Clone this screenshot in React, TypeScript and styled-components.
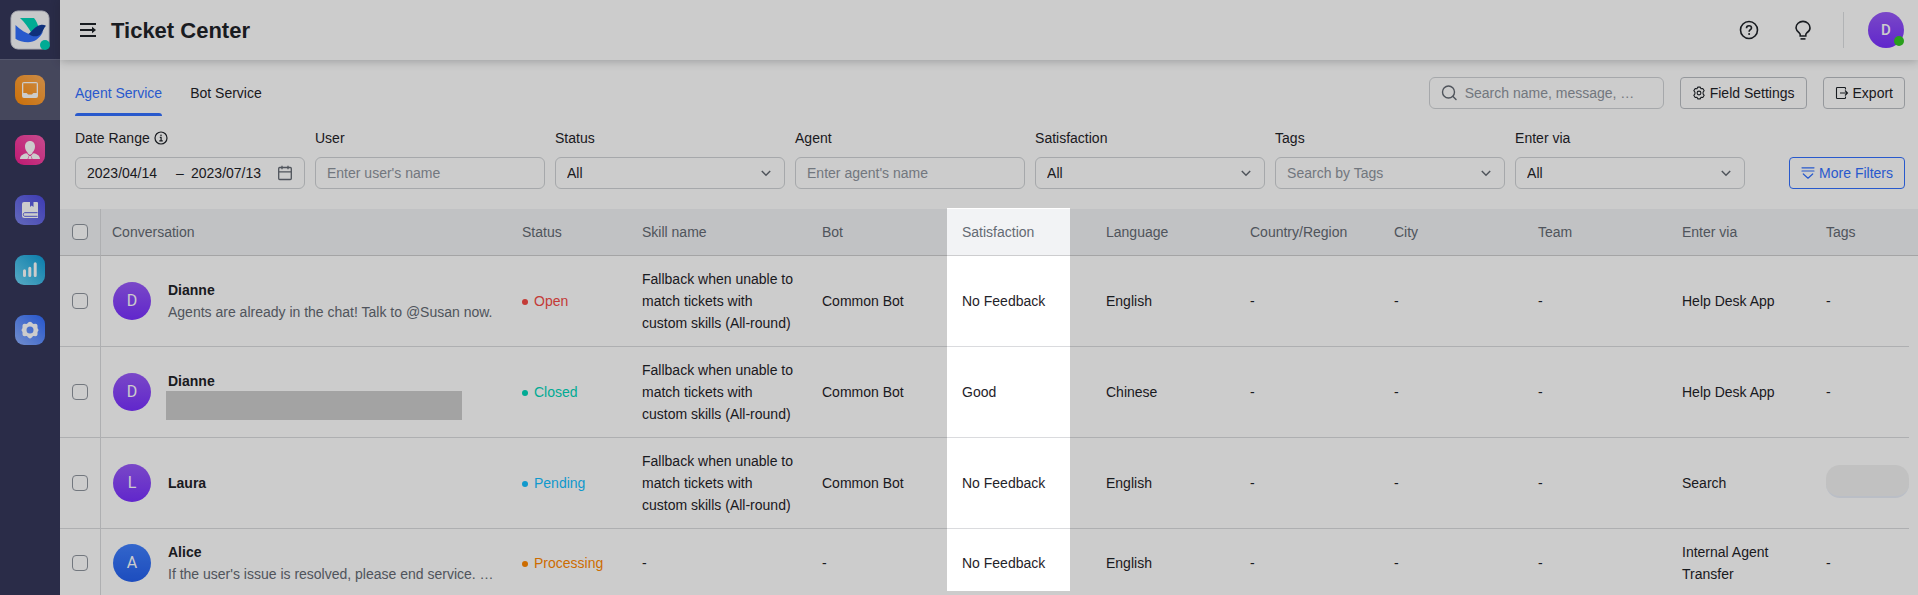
import React from "react";
import styled, { createGlobalStyle, css } from "styled-components";

const GlobalStyle = createGlobalStyle`
  *, *::before, *::after { box-sizing: border-box; }
  body {
    margin: 0;
    background: #fff;
    color: #1f2329;
    font-family: "Liberation Sans", Arial, sans-serif;
    font-size: 14px;
    line-height: 22px;
  }
  button, input, select { font: inherit; color: inherit; }
`;

/* ---------- shell ---------- */

const Shell = styled.div`
  display: flex;
  height: 100vh;
  min-width: 1500px;
  overflow: hidden;
`;

const Sidebar = styled.nav`
  flex: 0 0 60px;
  background: #35375a;
`;

const LogoArea = styled.div`
  display: flex;
  align-items: center;
  justify-content: center;
  height: 60px;
  border-bottom: 1px solid #6a6c88;
`;

const NavItem = styled.a<{ $active?: boolean }>`
  display: flex;
  align-items: center;
  justify-content: center;
  height: 60px;
  background: ${(p) => (p.$active ? "#575974" : "transparent")};
`;

const NavTile = styled.span<{ $from: string; $to: string }>`
  display: block;
  width: 30px;
  height: 30px;
  border-radius: 9px;
  background: linear-gradient(45deg, ${(p) => p.$from}, ${(p) => p.$to});
  svg { display: block; }
`;

const Main = styled.main`
  flex: 1;
  min-width: 0;
  display: flex;
  flex-direction: column;
`;

/* ---------- header ---------- */

const Header = styled.header`
  flex: none;
  display: flex;
  align-items: center;
  height: 60px;
  padding: 0 14px 0 20px;
  box-shadow: 0 1px 9px rgba(31, 35, 41, 0.28);
`;

const IconButton = styled.button`
  display: flex;
  padding: 0;
  border: 0;
  background: none;
`;

const Title = styled.h1`
  flex: 1;
  margin: 0 0 0 15px;
  padding-top: 2px;
  font-size: 22px;
  line-height: 32px;
`;

const HeaderTools = styled.div`
  display: flex;
  align-items: center;
  gap: 34px;
`;

const Divider = styled.span`
  width: 1px;
  height: 36px;
  margin: 0 24px 0 30px;
  background: #dee0e3;
`;

const Avatar = styled.span<{ $tone?: "purple" | "blue" }>`
  position: relative;
  flex: none;
  display: flex;
  align-items: center;
  justify-content: center;
  width: 38px;
  height: 38px;
  border-radius: 50%;
  background: ${(p) =>
    p.$tone === "blue"
      ? "linear-gradient(#4080ff, #2460ee)"
      : "linear-gradient(#985afa, #7930ff)"};
  color: #fff;
  font-family: Roboto, sans-serif;
  font-size: 16px;
`;

const AccountAvatar = styled(Avatar)`
  width: 36px;
  height: 36px;
  font-size: 15px;
  font-weight: 500;
`;

const Presence = styled.i`
  position: absolute;
  right: 0;
  bottom: 2px;
  width: 10px;
  height: 10px;
  border-radius: 50%;
  background: #34c724;
`;

/* ---------- toolbar ---------- */

const Toolbar = styled.div`
  flex: none;
  display: flex;
  align-items: flex-start;
  gap: 16px;
  padding: 17px 13px 0 15px;
`;

const Tabs = styled.div`
  flex: 1;
  display: flex;
  gap: 28px;
`;

const Tab = styled.button<{ $active?: boolean }>`
  position: relative;
  padding: 5px 0 12px;
  border: 0;
  background: none;
  color: ${(p) => (p.$active ? "#3370ff" : "#1f2329")};
  ${(p) =>
    p.$active &&
    css`
      &::after {
        content: "";
        position: absolute;
        left: 0;
        right: 0;
        bottom: 0;
        height: 3px;
        border-radius: 3px 3px 0 0;
        background: #3370ff;
      }
    `}
`;

const Button = styled.button<{ $primary?: boolean }>`
  flex: none;
  display: flex;
  align-items: center;
  gap: 4px;
  height: 32px;
  padding: 0 11px;
  border: 1px solid ${(p) => (p.$primary ? "#3370ff" : "#bbbfc4")};
  border-radius: 4px;
  background: #fff;
  color: ${(p) => (p.$primary ? "#3370ff" : "#1f2329")};
  white-space: nowrap;
`;

const Field = styled.div`
  position: relative;
  display: flex;
  align-items: center;
  width: 100%;
  height: 32px;
  padding: 0 11px;
  border: 1px solid #d0d3d6;
  border-radius: 6px;
  color: #646a73;
`;

const SearchField = styled(Field)`
  gap: 8px;
  width: 235px;
`;

const TextInput = styled.input`
  flex: 1;
  min-width: 0;
  padding: 0;
  border: 0;
  outline: 0;
  background: none;
  color: #1f2329;
  &::placeholder { color: #8f959e; opacity: 1; }
`;

const StartDateInput = styled(TextInput)`
  flex: 0 0 80px;
`;

const Dash = styled.span`
  width: 24px;
  padding-left: 9px;
  color: #1f2329;
`;

/* ---------- filters ---------- */

const Filters = styled.div`
  flex: none;
  display: flex;
  align-items: flex-end;
  gap: 44px;
  padding: 11px 13px 20px 15px;
`;

const FilterGrid = styled.div`
  flex: 1;
  display: grid;
  grid-template-columns: repeat(7, minmax(0, 1fr));
  gap: 10px;
`;

const FilterCell = styled.div`
  display: flex;
  flex-direction: column;
  gap: 8px;
`;

const FilterLabel = styled.label`
  display: flex;
  align-items: center;
  gap: 4px;
`;

const Select = styled.select<{ $muted?: boolean }>`
  flex: 1;
  min-width: 0;
  padding: 0;
  border: 0;
  outline: 0;
  appearance: none;
  background: none;
  color: ${(p) => (p.$muted ? "#8f959e" : "#1f2329")};
`;

/* ---------- table ---------- */

const TableArea = styled.section`
  position: relative;
  flex: 1;
  min-height: 0;
`;

const Table = styled.table`
  width: 100%;
  table-layout: fixed;
  border-collapse: separate;
  border-spacing: 0;
`;

const Th = styled.th`
  height: 47px;
  padding: 0 12px;
  border-bottom: 1px solid #cdcdcf;
  background: #f2f3f5;
  color: #646a73;
  font-weight: 400;
  text-align: left;
  white-space: nowrap;
`;

const Td = styled.td`
  padding: 12px;
  border-bottom: 1px solid #dadbde;
`;

const GutterTh = styled(Th)`
  padding: 0;
`;

const divided = css`
  padding-left: 11px;
  border-left: 1px solid #dadbde;
`;

const ConversationTh = styled(Th)`${divided}`;
const ConversationTd = styled(Td)`${divided}`;

const TagTd = styled(Td)`
  padding-right: 0;
`;

const Checkbox = styled.input.attrs({ type: "checkbox" })`
  display: block;
  width: 16px;
  height: 16px;
  margin: 0;
  appearance: none;
  border: 1px solid #8f959e;
  border-radius: 4px;
  background: #fff;
`;

const Conversation = styled.div`
  display: flex;
  align-items: center;
  gap: 17px;
  padding-left: 1px;
`;

const Person = styled.div`
  position: relative;
  min-width: 0;
`;

const Name = styled.div`
  font-weight: 700;
`;

const Message = styled.div`
  height: 22px;
  color: #646a73;
  white-space: nowrap;
`;

const Redaction = styled.span`
  position: absolute;
  left: -2px;
  top: 21px;
  width: 296px;
  height: 29px;
  background: #ccc;
`;

const Status = styled.span<{ $color: string }>`
  display: flex;
  align-items: center;
  gap: 6px;
  color: ${(p) => p.$color};
  &::before {
    content: "";
    width: 6px;
    height: 6px;
    margin-top: 2px;
    border-radius: 50%;
    background: currentColor;
  }
`;

const TagPill = styled.span`
  display: block;
  height: 33px;
  margin-bottom: 4px;
  border-bottom: 2px solid #e9eef8;
  border-radius: 14px;
  background: #f2f2f2;
`;

const Spotlight = styled.div`
  position: absolute;
  z-index: 10;
  top: -1px;
  right: 848px;
  bottom: 4px;
  width: 123px;
  box-shadow: 0 0 0 4000px rgba(0, 0, 0, 0.2);
  pointer-events: none;
`;

/* ---------- icons ---------- */

const Logo = () => (
  <svg width="40" height="40" viewBox="0 0 40 40" role="img" aria-label="Help desk">
    <rect x="1" y="1" width="38" height="38" rx="7" fill="#fbfbfd" stroke="#d5d6e0" />
    <path d="M10 8h14c2.400 2.800 4 6.500 4.500 9.500-2.500 1.500-5 4-7 5.500C18.500 17.500 14.500 12 10 8Z" fill="#00d6b9" />
    <path d="M5.500 15c4.500 4.500 10.500 8.500 17 10.200 4.500 1.200 8-.7 10.800-4.200-3.300 7.500-9 11.200-15.300 11.200-5 0-9.500-1.400-12.500-3.500Z" fill="#3370ff" />
    <path d="M18.500 24c4-3 6.500-8 12-9 2-.4 4 0 5.500.7-2.300 2-2.700 5.500-5 8-3.300 3.700-8.500 3.300-12.500.3Z" fill="#133c9a" />
    <circle cx="35" cy="35" r="5" fill="#00d6b9" />
  </svg>
);

const InboxGlyph = () => (
  <svg width="30" height="30" viewBox="0 0 30 30" fill="#fff">
    <path fillRule="evenodd" d="M9 7h12a2 2 0 0 1 2 2v12a2 2 0 0 1-2 2H9a2 2 0 0 1-2-2V9a2 2 0 0 1 2-2Zm-.700 1.300v9.700h3c.6 0 .9.300 1.100.8.200.5.500.8 1 .8h3.200c.5 0 .8-.3 1-.8.200-.5.500-.8 1.100-.8h3V8.300Z" />
  </svg>
);

const UserGlyph = () => (
  <svg width="30" height="30" viewBox="0 0 30 30" fill="#fff">
    <path d="M15 6c3 0 5 2.200 5 5.500 0 2.300-1 4.500-2.500 5.700v1L15 20l-2.500-1.800v-1C11 16 10 13.800 10 11.500 10 8.200 12 6 15 6Z" />
    <path d="M11.500 18.200 14 20.500 12.500 24H5c0-3 2.500-5 6.500-5.800ZM18.500 18.200 16 20.500l1.500 3.500H25c0-3-2.500-5-6.500-5.800ZM14.200 21h1.600l1 3h-3.600Z" />
  </svg>
);

const BookGlyph = () => (
  <svg width="30" height="30" viewBox="0 0 30 30">
    <path d="M9 7h6v5l1.700-1.500 1.800 1.500V7H22a1 1 0 0 1 1 1v15H9.500A2.500 2.500 0 0 1 7 20.500V9a2 2 0 0 1 2-2Z" fill="#fff" />
    <path d="M22.500 17.700H9.800c-2 0-2 3.600 0 3.600h12.700" fill="none" stroke="#5a5fe0" strokeWidth="1" />
  </svg>
);

const ChartGlyph = () => (
  <svg width="30" height="30" viewBox="0 0 30 30" stroke="#fff" strokeWidth="3" strokeLinecap="round">
    <path d="M9.500 15.800v4.700M14.800 13.300v7.200M20.200 8.700v11.800" />
  </svg>
);

const GearGlyph = () => (
  <svg width="30" height="30" viewBox="0 0 30 30">
    <path
      fill="#fff"
      fillRule="evenodd"
      d="M13.500 7.300c.8-.9 2.200-.9 3 0l1.200 1.300c.3.300.7.500 1.100.4l1.500-.2c1.200-.1 2.200.8 2.200 2v1.800c0 .4.100.8.300 1.100l.4.500c.4.500.4 1.200 0 1.700l-.4.500c-.2.300-.3.700-.3 1.100v1.800c0 1.200-1 2.100-2.200 2l-1.500-.2c-.4-.1-.8.100-1.100.4l-1.200 1.300c-.8.900-2.200.9-3 0l-1.200-1.300c-.3-.3-.7-.5-1.100-.4l-1.500.2c-1.200.1-2.200-.8-2.200-2v-1.800c0-.4-.1-.8-.3-1.100l-.4-.5c-.4-.5-.4-1.200 0-1.700l.4-.5c.2-.3.300-.7.300-1.100v-1.800c0-1.200 1-2.100 2.200-2l1.500.2c.4.100.8-.1 1.100-.4ZM15 11.600a3.500 3.500 0 1 0 0 7 3.500 3.500 0 0 0 0-7Z"
    />
  </svg>
);

const MenuIcon = () => (
  <svg width="16" height="16" viewBox="0 0 16 16">
    <path d="M0 2h16M0 8h13M0 14h16" stroke="#1f2329" strokeWidth="1.800" />
    <path d="M12 4.800 16 8l-4 3.200Z" fill="#1f2329" />
  </svg>
);

const HelpIcon = () => (
  <svg width="20" height="20" viewBox="0 0 20 20" fill="none" stroke="#1f2329" strokeWidth="1.600">
    <circle cx="10" cy="10" r="8.500" />
    <path d="M7.500 8.200c0-1.500 1.100-2.400 2.500-2.400s2.500.9 2.500 2.200c0 1.700-2.400 1.800-2.400 3.700" />
    <circle cx="10.100" cy="14" r="1" fill="#1f2329" stroke="none" />
  </svg>
);

const BulbIcon = () => (
  <svg width="20" height="20" viewBox="0 0 20 20" fill="none" stroke="#1f2329" strokeWidth="1.600">
    <path d="M7.200 16v-1.200c0-.8-.4-1.400-1.100-2.100A6.500 6.500 0 0 1 3 8c0-3.800 3.200-6.600 7-6.600S17 4.200 17 8c0 2-1.200 3.500-3.100 4.700-.7.700-1.100 1.300-1.100 2.100V16Z" />
    <path d="M7.500 18.900h5" />
  </svg>
);

const SearchIcon = () => (
  <svg width="16" height="16" viewBox="0 0 16 16" fill="none" stroke="currentColor" strokeWidth="1.400">
    <circle cx="7.500" cy="7" r="6" />
    <path d="m12 11.500 3 3" strokeLinecap="round" />
  </svg>
);

const SettingsIcon = () => (
  <svg width="14" height="14" viewBox="0 0 14 14" fill="none" stroke="#1f2329" strokeWidth="1.100" strokeLinejoin="round">
    <path d="M5.700 1.100h2.600l.7 1.700 1.800-.3 1.400 2.200L11.100 6v2l1.100 1.300-1.400 2.200-1.800-.3-.7 1.700H5.700L5 11.200l-1.800.3-1.400-2.200L2.900 8V6L1.800 4.700l1.400-2.200 1.800.3Z" />
    <circle cx="7" cy="7" r="1.900" />
  </svg>
);

const ExportIcon = () => (
  <svg width="14" height="14" viewBox="0 0 14 14" fill="none" stroke="#1f2329" strokeWidth="1.100">
    <path d="M10.500 3.500V2.300a.8.800 0 0 0-.8-.8H2.300a.8.800 0 0 0-.8.800v9.400c0 .4.300.8.800.8h7.400c.4 0 .8-.4.800-.8v-1.200M5 7h7.500M10 4.500 12.500 7 10 9.500" />
  </svg>
);

const FilterIcon = () => (
  <svg width="14" height="14" viewBox="0 0 14 14" fill="none" stroke="currentColor" strokeWidth="1.200">
    <path d="M1 1.800h12M1 5h12M2.300 8 7 12.200 11.700 8" strokeLinecap="round" strokeLinejoin="round" />
  </svg>
);

const InfoIcon = () => (
  <svg width="14" height="14" viewBox="0 0 14 14" fill="none" stroke="#1f2329" strokeWidth="1.200">
    <circle cx="7" cy="7" r="6" />
    <path d="M5.800 6.300h1.300v3.400M5.300 9.900h3.500" />
    <circle cx="7" cy="4.200" r=".8" fill="#1f2329" stroke="none" />
  </svg>
);

const CalendarIcon = () => (
  <svg width="16" height="16" viewBox="0 0 16 16" fill="none" stroke="currentColor" strokeWidth="1.300">
    <rect x="1.700" y="2.500" width="12.600" height="12" rx="1" />
    <path d="M1.700 6.800h12.600M5 .8v3.400M11 .8v3.400" />
  </svg>
);

const ChevronIcon = () => (
  <svg width="14" height="14" viewBox="0 0 14 14" fill="none" stroke="currentColor" strokeWidth="1.500" aria-hidden="true">
    <path d="m2.800 5 4.200 4.200L11.200 5" />
  </svg>
);

/* ---------- data ---------- */

const NAV = [
  { label: "Tickets", from: "#ff8c0a", to: "#ffb05a", glyph: <InboxGlyph /> },
  { label: "Users", from: "#f0208f", to: "#f95fb2", glyph: <UserGlyph /> },
  { label: "Knowledge base", from: "#7c84ea", to: "#4d4ae0", glyph: <BookGlyph /> },
  { label: "Reports", from: "#6fd6f5", to: "#0c9bd6", glyph: <ChartGlyph /> },
  { label: "Settings", from: "#8fb2ff", to: "#2f6bff", glyph: <GearGlyph /> },
];

const COLUMNS = [
  { title: "Status", width: 120 },
  { title: "Skill name", width: 180 },
  { title: "Bot", width: 140 },
  { title: "Satisfaction", width: 144 },
  { title: "Language", width: 144 },
  { title: "Country/Region", width: 144 },
  { title: "City", width: 144 },
  { title: "Team", width: 144 },
  { title: "Enter via", width: 144 },
  { title: "Tags", width: 95 },
];

const SKILL = "Fallback when unable to match tickets with custom skills (All-round)";

interface Ticket {
  name: string;
  message?: string;
  redacted?: boolean;
  tone?: "purple" | "blue";
  status: string;
  color: string;
  skill: string;
  bot: string;
  satisfaction: string;
  language: string;
  via: string;
  tagged?: boolean;
}

const TICKETS: Ticket[] = [
  { name: "Dianne", message: "Agents are already in the chat! Talk to @Susan now.", status: "Open", color: "#f54a45", skill: SKILL, bot: "Common Bot", satisfaction: "No Feedback", language: "English", via: "Help Desk App" },
  { name: "Dianne", redacted: true, status: "Closed", color: "#00d6b9", skill: SKILL, bot: "Common Bot", satisfaction: "Good", language: "Chinese", via: "Help Desk App" },
  { name: "Laura", status: "Pending", color: "#14c0ff", skill: SKILL, bot: "Common Bot", satisfaction: "No Feedback", language: "English", via: "Search", tagged: true },
  { name: "Alice", message: "If the user's issue is resolved, please end service. …", tone: "blue", status: "Processing", color: "#ff8800", skill: "-", bot: "-", satisfaction: "No Feedback", language: "English", via: "Internal Agent Transfer" },
];

/* ---------- composed parts ---------- */

const TextFilter = ({ id, label, placeholder }: { id: string; label: string; placeholder: string }) => (
  <FilterCell>
    <FilterLabel htmlFor={id}>{label}</FilterLabel>
    <Field>
      <TextInput id={id} placeholder={placeholder} />
    </Field>
  </FilterCell>
);

const SelectFilter = ({ id, label, value, muted }: { id: string; label: string; value: string; muted?: boolean }) => (
  <FilterCell>
    <FilterLabel htmlFor={id}>{label}</FilterLabel>
    <Field>
      <Select id={id} $muted={muted}>
        <option>{value}</option>
      </Select>
      <ChevronIcon />
    </Field>
  </FilterCell>
);

const TicketRow = ({ ticket: t }: { ticket: Ticket }) => (
  <tr>
    <Td>
      <Checkbox aria-label={`Select ${t.name}`} />
    </Td>
    <ConversationTd>
      <Conversation>
        <Avatar $tone={t.tone}>{t.name[0]}</Avatar>
        <Person>
          <Name>{t.name}</Name>
          {t.message && <Message>{t.message}</Message>}
          {t.redacted && (
            <>
              <Message />
              <Redaction />
            </>
          )}
        </Person>
      </Conversation>
    </ConversationTd>
    <Td>
      <Status $color={t.color}>{t.status}</Status>
    </Td>
    <Td>{t.skill}</Td>
    <Td>{t.bot}</Td>
    <Td>{t.satisfaction}</Td>
    <Td>{t.language}</Td>
    <Td>-</Td>
    <Td>-</Td>
    <Td>-</Td>
    <Td>{t.via}</Td>
    <TagTd>{t.tagged ? <TagPill /> : "-"}</TagTd>
  </tr>
);

export default function App() {
  return (
    <Shell>
      <GlobalStyle />
      <Sidebar aria-label="Main">
        <LogoArea>
          <Logo />
        </LogoArea>
        {NAV.map((n, i) => (
          <NavItem key={n.label} href="#" aria-label={n.label} $active={i === 0}>
            <NavTile $from={n.from} $to={n.to}>{n.glyph}</NavTile>
          </NavItem>
        ))}
      </Sidebar>

      <Main>
        <Header>
          <IconButton aria-label="Expand menu"><MenuIcon /></IconButton>
          <Title>Ticket Center</Title>
          <HeaderTools>
            <IconButton aria-label="Help"><HelpIcon /></IconButton>
            <IconButton aria-label="Tips"><BulbIcon /></IconButton>
          </HeaderTools>
          <Divider />
          <AccountAvatar>D<Presence /></AccountAvatar>
        </Header>

        <Toolbar>
          <Tabs role="tablist">
            <Tab role="tab" aria-selected="true" $active>Agent Service</Tab>
            <Tab role="tab" aria-selected="false">Bot Service</Tab>
          </Tabs>
          <SearchField>
            <SearchIcon />
            <TextInput aria-label="Search" placeholder="Search name, message, …" />
          </SearchField>
          <Button><SettingsIcon />Field Settings</Button>
          <Button><ExportIcon />Export</Button>
        </Toolbar>

        <Filters>
          <FilterGrid>
            <FilterCell>
              <FilterLabel htmlFor="date-from">Date Range <InfoIcon /></FilterLabel>
              <Field>
                <StartDateInput id="date-from" defaultValue="2023/04/14" />
                <Dash>–</Dash>
                <TextInput aria-label="Date range end" defaultValue="2023/07/13" />
                <CalendarIcon />
              </Field>
            </FilterCell>
            <TextFilter id="user" label="User" placeholder="Enter user's name" />
            <SelectFilter id="status" label="Status" value="All" />
            <TextFilter id="agent" label="Agent" placeholder="Enter agent's name" />
            <SelectFilter id="satisfaction" label="Satisfaction" value="All" />
            <SelectFilter id="tags" label="Tags" value="Search by Tags" muted />
            <SelectFilter id="via" label="Enter via" value="All" />
          </FilterGrid>
          <Button $primary><FilterIcon />More Filters</Button>
        </Filters>

        <TableArea>
          <Table>
            <colgroup>
              <col width={40} />
              <col />
              {COLUMNS.map((c) => <col key={c.title} width={c.width} />)}
              <col width={9} />
            </colgroup>
            <thead>
              <tr>
                <Th><Checkbox aria-label="Select all tickets" /></Th>
                <ConversationTh>Conversation</ConversationTh>
                {COLUMNS.map((c) => <Th key={c.title}>{c.title}</Th>)}
                <GutterTh />
              </tr>
            </thead>
            <tbody>
              {TICKETS.map((t, i) => <TicketRow key={i} ticket={t} />)}
            </tbody>
          </Table>
          <Spotlight />
        </TableArea>
      </Main>
    </Shell>
  );
}
